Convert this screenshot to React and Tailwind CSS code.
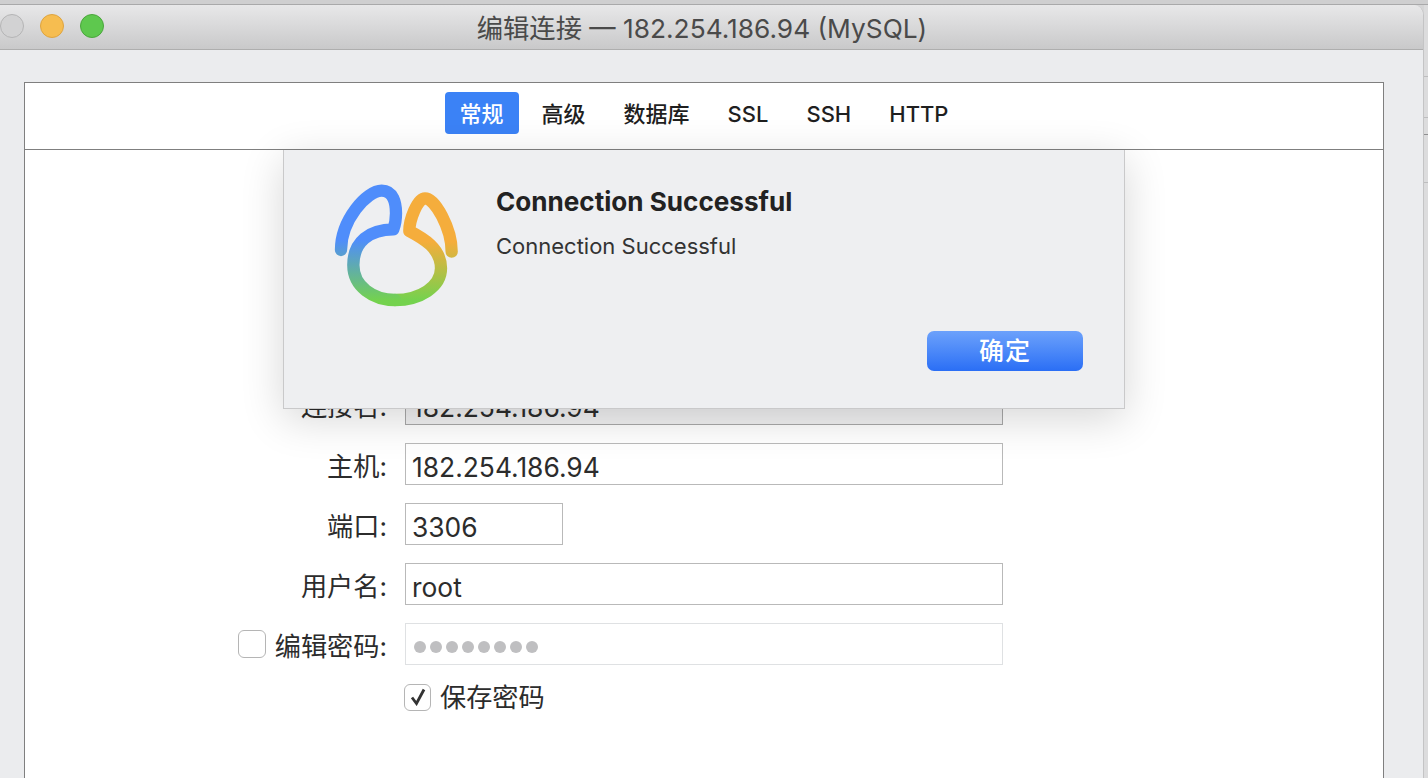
import React from 'react';

const FONT = 'font-["Inter","Noto_Sans_CJK_SC",sans-serif]';

const Logo = () => (
  <svg width="170" height="150" viewBox="0 0 510 450" fill="none">
    <defs>
      <linearGradient id="blueGreen" gradientUnits="userSpaceOnUse" x1="0" y1="210" x2="0" y2="392">
        <stop offset="0" stopColor="#4f8dfb" />
        <stop offset="1" stopColor="#74d24e" />
      </linearGradient>
      <linearGradient id="orangeGreen" gradientUnits="userSpaceOnUse" x1="0" y1="215" x2="0" y2="392">
        <stop offset="0" stopColor="#f5ad3c" />
        <stop offset="1" stopColor="#74d24e" />
      </linearGradient>
    </defs>
    <path
      d="M425 245C425 175 375 85 345 85C322 85 298 150 298 183C340 205 393 235 393 295C393 350 330 390 255 390"
      stroke="url(#orangeGreen)"
      strokeWidth="37"
      strokeLinecap="round"
      strokeLinejoin="round"
    />
    <path
      d="M93 240C93 150 170 62 215 62C250 62 258 100 258 130C258 150 255 165 250 178C180 178 130 215 130 285C130 350 190 390 255 390"
      stroke="url(#blueGreen)"
      strokeWidth="37"
      strokeLinecap="round"
      strokeLinejoin="round"
    />
  </svg>
);

const Field = ({ label, value, width = 'w-[598px]', muted, dim, lead }) => (
  <div className="grid grid-cols-[362px_1fr] gap-x-[18px] items-center h-[42px]">
    <div className="flex items-center justify-end pt-[5px] text-[26.2px] leading-[36px] text-[#2c2c2c]">
      {lead}
      <span>{label}</span>
    </div>
    <div
      className={`${width} h-[42px] flex items-center px-[6px] pt-[6px] border text-[26.4px] leading-[34px] text-[#2c2c2c] ${
        muted ? 'bg-[#f1f1f2] border-[#a9a9a9]' : dim ? 'bg-white border-[#dfe1e3]' : 'bg-white border-[#b9b9b9]'
      }`}
    >
      {value}
    </div>
  </div>
);

const tabs = ['常规', '高级', '数据库', 'SSL', 'SSH', 'HTTP'];

export default function App() {
  return (
    <div className={`${FONT} relative h-[778px] w-[1428px] overflow-hidden bg-[#d5d5d6]`}>
      <div className="h-[5px] bg-[#cfcfd0] border-b border-[#a9a9aa]" />
      <div className="flex h-[773px]">
        <div className="w-[1424px] flex flex-col bg-[#ebecee] border-r border-[#c4c4c5] rounded-tr-[10px] overflow-hidden">
          {/* title bar */}
          <div className="h-[45px] shrink-0 grid grid-cols-[104px_1fr_123px] items-center bg-gradient-to-b from-[#e8e8e9] to-[#c9c9ca] border-b border-[#aeaeae]">
            <div className="flex gap-[16px] -mt-[3px]">
              <span className="w-[24px] h-[24px] rounded-full bg-[#d2d2d3] border border-[#b4b4b5]" />
              <span className="w-[24px] h-[24px] rounded-full bg-[#f6bd50] border border-[#dea440]" />
              <span className="w-[24px] h-[24px] rounded-full bg-[#5ec84e] border border-[#4aa63c]" />
            </div>
            <div className="text-center text-[26.3px] leading-[34px] text-[#4a4a4a] pt-[3px] whitespace-nowrap">
              编辑连接 — 182.254.186.94 (MySQL)
            </div>
            <div />
          </div>

          {/* panel */}
          <div className="pt-[32px] pl-[24px]">
            <div className="w-[1360px] h-[720px] bg-white border border-[#7f7f7f]">
              <div className="h-[67px] pb-[6px] flex items-center justify-center gap-[8px] border-b border-[#7f7f7f] text-[22px] font-medium text-[#1f1f1f]">
                {tabs.map((t, i) => (
                  <div
                    key={t}
                    className={`h-[42px] px-[15px] pt-[2px] flex items-center rounded-[4px] ${
                      i === 0 ? 'bg-[#3b82f6] text-white' : ''
                    }`}
                  >
                    {t}
                  </div>
                ))}
              </div>

              <div className="pt-[233px] flex flex-col gap-[18px]">
                <Field label="连接名:" value="182.254.186.94" muted />
                <Field label="主机:" value="182.254.186.94" />
                <Field label="端口:" value="3306" width="w-[158px]" />
                <Field label="用户名:" value="root" />
                <Field
                  label="编辑密码:"
                  dim
                  lead={<span className="w-[28px] h-[28px] mr-[9px] -mt-[6px] rounded-[6px] bg-white border border-[#b5b5b5]" />}
                  value={
                    <div className="flex gap-[4px] ml-[2px]">
                      {[0, 1, 2, 3, 4, 5, 6, 7].map(n => (
                        <span key={n} className="w-[12px] h-[12px] rounded-full bg-[#bfbfc1]" />
                      ))}
                    </div>
                  }
                />
                <div className="grid grid-cols-[362px_1fr] gap-x-[17px] items-center h-[28px]">
                  <div />
                  <div className="flex items-center h-[28px] text-[26.2px] leading-none text-[#2c2c2c]">
                    <span className="w-[27px] h-[27px] mr-[9px] flex items-center justify-center rounded-[6px] bg-white border border-[#b5b5b5]">
                      <svg width="18" height="18" viewBox="0 0 18 18" fill="none">
                        <path d="M3 9.5L7.5 15.5L15 1.5" stroke="#333" strokeWidth="2.8" />
                      </svg>
                    </span>
                    <span className="pt-[2px]">保存密码</span>
                  </div>
                </div>
              </div>
            </div>
          </div>
        </div>
        {/* sliver of the window behind */}
        <div className="w-[4px] bg-[#dcdcdd] flex flex-col">
          <div className="h-[72px] border-b border-[#bdbdbe]" />
          <div className="h-[41px] border-b border-[#bdbdbe]" />
          <div className="h-[17px] border-b border-[#8f8f90]" />
          <div className="h-[48px] border-b border-[#bdbdbe]" />
        </div>
      </div>

      {/* alert sheet */}
      <div className="absolute left-[283px] top-[150px] w-[842px] h-[259px] bg-[#eeeff1] border border-t-0 border-[#c9c9ca] shadow-[0_10px_40px_rgba(0,0,0,0.16)]">
        <div className="absolute left-[26px] top-[20px]">
          <Logo />
        </div>
        <div className="absolute left-[212px] top-[32px] text-[26.1px] font-bold text-[#222] whitespace-nowrap">
          Connection Successful
        </div>
        <div className="absolute left-[212px] top-[80px] text-[22px] text-[#333] whitespace-nowrap">
          Connection Successful
        </div>
        <div className="absolute left-[643px] top-[181px] w-[156px] h-[40px] flex items-center justify-center pt-[2px] rounded-[7px] bg-gradient-to-b from-[#6ca1fb] to-[#2a6ef5] text-white text-[25px] font-medium tracking-[1px]">
          确定
        </div>
      </div>
    </div>
  );
}
